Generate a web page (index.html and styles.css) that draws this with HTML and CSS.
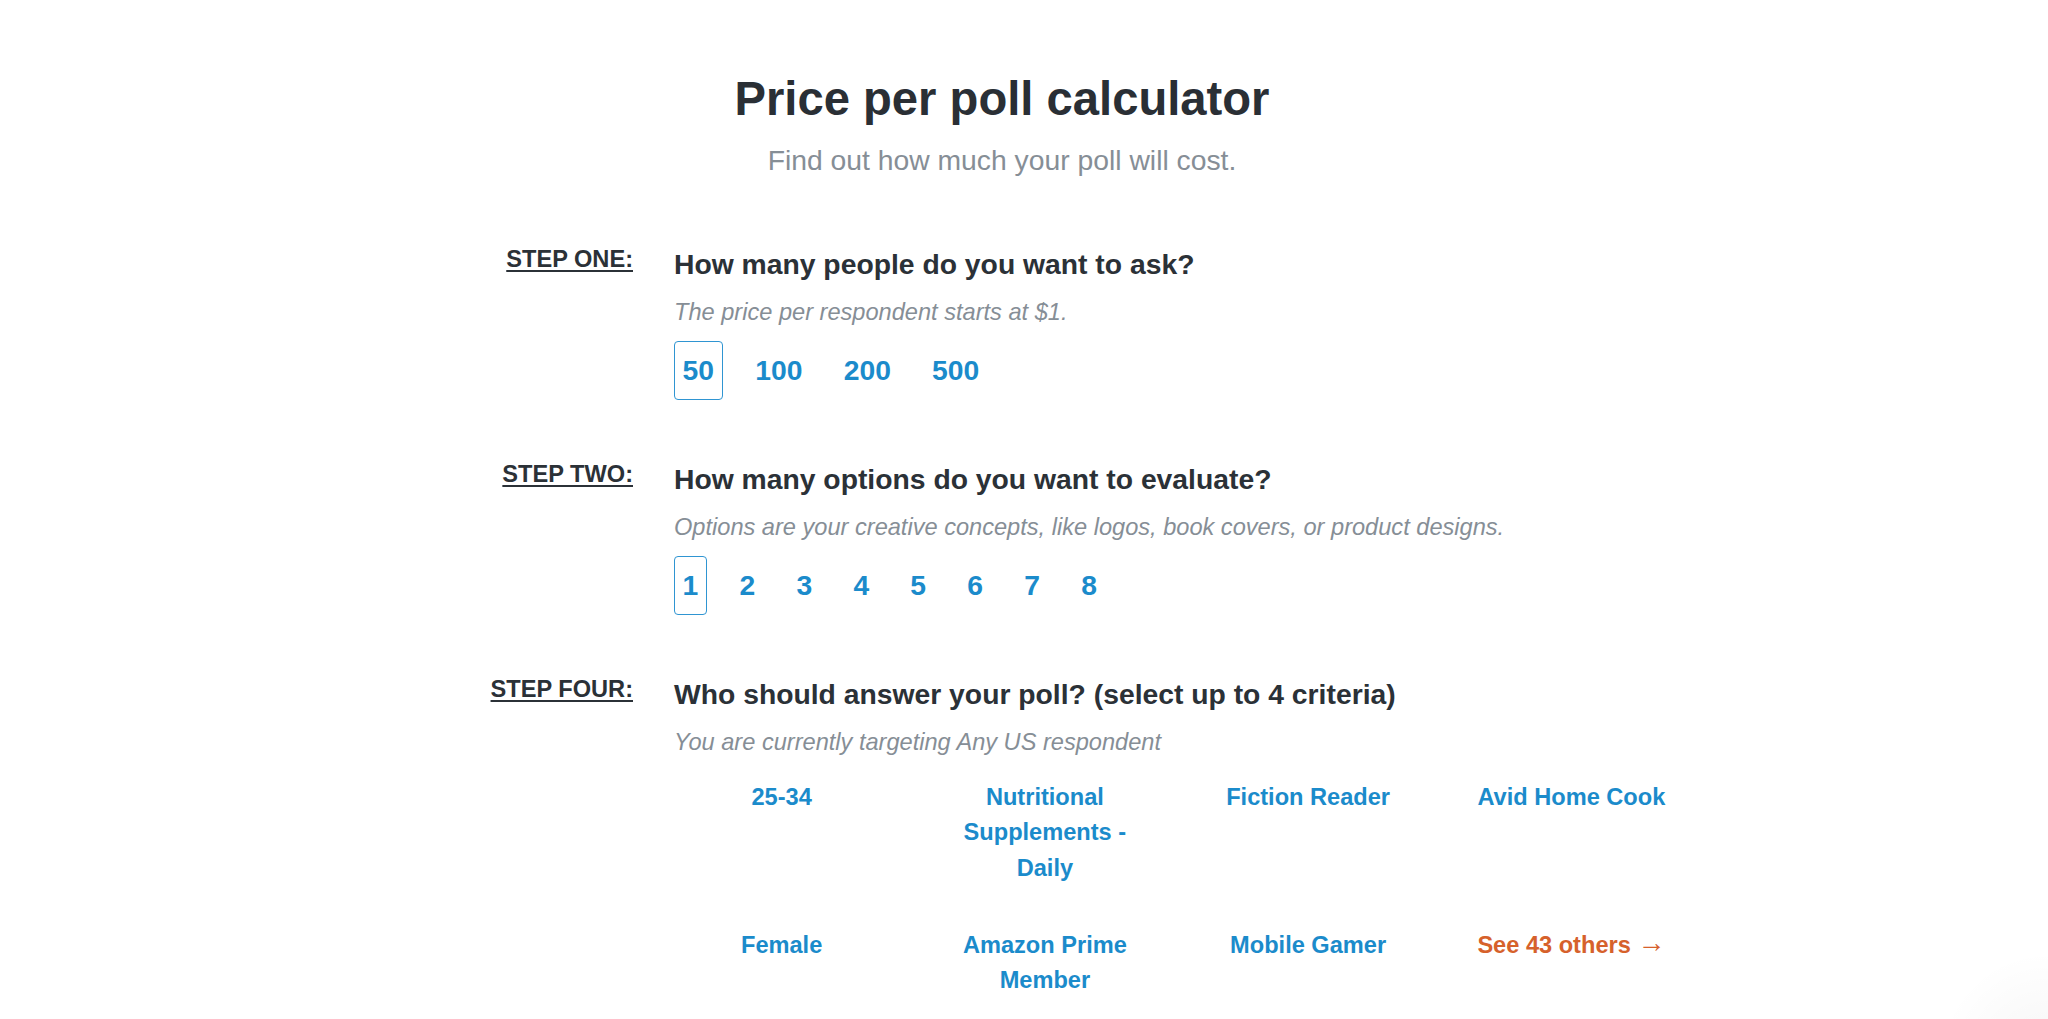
FILE: index.html
```html
<!DOCTYPE html>
<html lang="en">
<head>
<meta charset="utf-8">
<title>Price per poll calculator</title>
<link rel="stylesheet" href="styles.css">
</head>
<body>
<main class="page">
  <header class="intro">
    <h1 class="title">Price per poll calculator</h1>
    <p class="subtitle">Find out how much your poll will cost.</p>
  </header>

  <section class="step">
    <div class="step-label">STEP ONE:</div>
    <div class="step-body">
      <h2 class="question">How many people do you want to ask?</h2>
      <p class="hint">The price per respondent starts at $1.</p>
      <div class="choices">
        <a class="choice is-selected">50</a>
        <a class="choice">100</a>
        <a class="choice">200</a>
        <a class="choice">500</a>
      </div>
    </div>
  </section>

  <section class="step">
    <div class="step-label">STEP TWO:</div>
    <div class="step-body">
      <h2 class="question">How many options do you want to evaluate?</h2>
      <p class="hint">Options are your creative concepts, like logos, book covers, or product designs.</p>
      <div class="choices">
        <a class="choice is-selected">1</a>
        <a class="choice">2</a>
        <a class="choice">3</a>
        <a class="choice">4</a>
        <a class="choice">5</a>
        <a class="choice">6</a>
        <a class="choice">7</a>
        <a class="choice">8</a>
      </div>
    </div>
  </section>

  <section class="step">
    <div class="step-label">STEP FOUR:</div>
    <div class="step-body">
      <h2 class="question">Who should answer your poll? (select up to 4 criteria)</h2>
      <p class="hint">You are currently targeting Any US respondent</p>
      <div class="criteria">
        <a class="criterion">25-34</a>
        <a class="criterion">Nutritional Supplements - Daily</a>
        <a class="criterion">Fiction Reader</a>
        <a class="criterion">Avid Home Cook</a>
        <a class="criterion">Female</a>
        <a class="criterion">Amazon Prime Member</a>
        <a class="criterion">Mobile Gamer</a>
        <a class="criterion criterion-more">See 43 others <span class="arrow">&rarr;</span></a>
      </div>
    </div>
  </section>
</main>
</body>
</html>
```

FILE: styles.css
```css
html, body {
  margin: 0;
  padding: 0;
}

body {
  font-family: "Liberation Sans", Arial, sans-serif;
  font-size: 23.6px;
  color: #2b3137;
  background: #ffffff radial-gradient(circle at 100% 100%, rgba(0, 0, 0, 0.04), rgba(0, 0, 0, 0) 110px) no-repeat;
  min-height: 1019px;
}

.page {
  width: 1460px;
  margin: 0 auto;
  padding: 71px 44px 0 0;
}

.intro {
  text-align: center;
  margin-bottom: 65px;
}

.title {
  margin: 0;
  font-size: 47.2px;
  line-height: 56.6px;
  font-weight: 700;
  color: #2a2f35;
}

.subtitle {
  margin: 11.5px 0 0;
  font-size: 28.3px;
  line-height: 42.4px;
  color: #868e96;
}

.step {
  display: grid;
  grid-template-columns: 361px 1fr;
  column-gap: 41px;
  margin-bottom: 62px;
}

.step-label {
  text-align: right;
  font-size: 23.6px;
  line-height: 28.3px;
  font-weight: 700;
  text-decoration: underline;
  text-decoration-thickness: 2px;
  text-underline-offset: 3px;
  color: #2b3137;
  margin-top: -2px;
}

.step-body {
  min-width: 0;
}

.question {
  margin: 0;
  font-size: 28.3px;
  line-height: 34px;
  font-weight: 700;
  color: #2b3137;
}

.hint {
  margin: 14.6px 0 0;
  font-size: 23.6px;
  line-height: 35.4px;
  font-style: italic;
  color: #868e96;
}

.choices {
  display: flex;
  gap: 24px;
  margin-top: 10px;
}

.choice {
  display: block;
  padding: 7.3px 7.6px;
  border: 1px solid transparent;
  border-radius: 4px;
  font-size: 28.3px;
  line-height: 42.4px;
  font-weight: 700;
  color: #1b8bcb;
  cursor: pointer;
}

.choice.is-selected {
  border-color: #2f95d2;
}

.criteria {
  display: grid;
  grid-template-columns: repeat(4, 1fr);
  row-gap: 41.8px;
  width: 1053px;
  margin: 19.3px 0 0 -24px;
}

.criterion {
  display: block;
  padding: 0 20px;
  text-align: center;
  font-size: 23.6px;
  line-height: 35.4px;
  font-weight: 700;
  color: #1b8bcb;
  cursor: pointer;
}

.criterion-more {
  color: #d6612b;
}

.arrow {
  font-size: 28px;
  line-height: 1;
  font-weight: 400;
  vertical-align: 1px;
}
```
